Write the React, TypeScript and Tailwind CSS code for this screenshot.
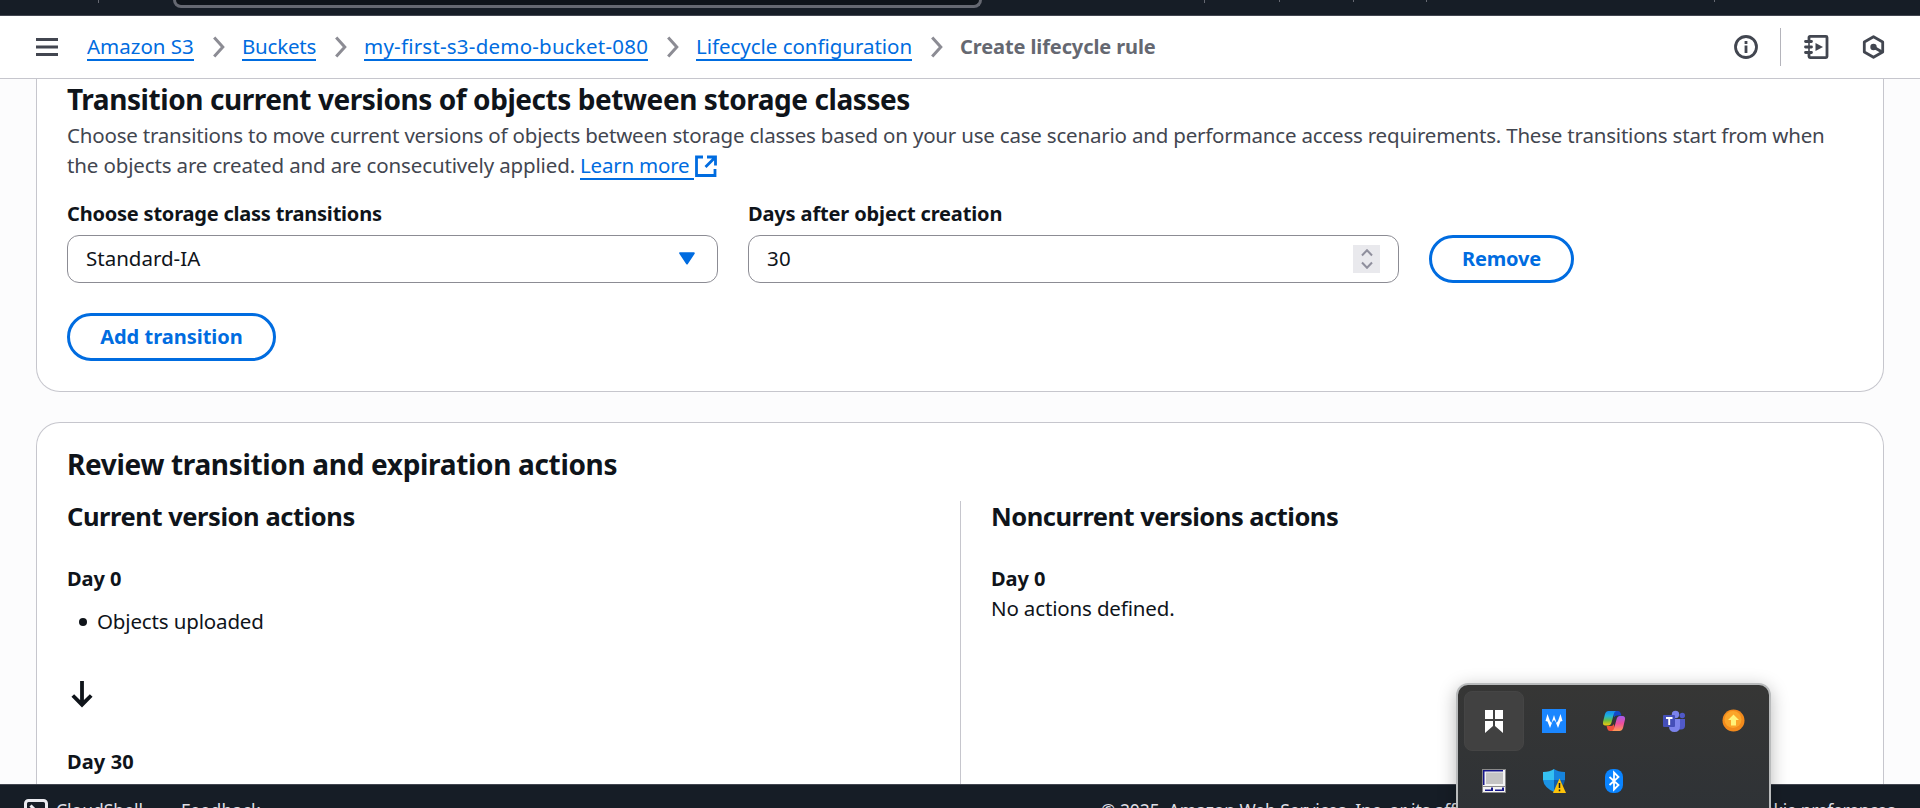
import React from "react";

const BODY = "text-[20.5px] leading-[30px] tracking-[-0.2px]";
const BOLD = "h-[30px] text-[20px] leading-[32px] font-bold";

function Chevron() {
  return (
    <svg width="12" height="22" viewBox="0 0 12 22" fill="none" stroke="#8c8c94" strokeWidth="3">
      <path d="M1.2 1.5 9.8 11 1.2 20.5" />
    </svg>
  );
}

function Crumb({ text, className }: { text: string; className: string }) {
  return (
    <a className={`block h-[29px] border-b-2 border-[#006ce0] text-[20.5px] leading-[29px] whitespace-nowrap text-[#006ce0] ${className}`}>
      {text}
    </a>
  );
}

function TopBar() {
  return (
    <div className="flex h-4 shrink-0 items-start border-b border-[#424650] bg-[#161d26]">
      <div className="ml-[98px] h-[3px] w-px bg-[#656871]" />
      <div className="ml-[74px] h-2 w-[809px] rounded-b-xl border-x-[3px] border-b-[3px] border-[#656871] bg-[#0f141a]" />
      <div className="ml-[222px] h-[3px] w-px bg-[#656871]" />
      <div className="ml-[74px] h-[2px] w-px bg-[#656871]" />
      <div className="ml-[73px] h-[2px] w-px bg-[#656871]" />
      <div className="ml-[72px] h-[2px] w-px bg-[#656871]" />
      <div className="ml-[287px] h-[2px] w-px bg-[#656871]" />
    </div>
  );
}

function Header() {
  return (
    <header className="flex h-[63px] shrink-0 items-start border-b border-[#c6c6cd] bg-white">
      <svg className="mt-[22px] ml-9" width="22" height="18" viewBox="0 0 22 18" fill="#424650">
        <path d="M0 0h22v3H0zM0 7.5h22v3H0zM0 15h22v3H0z" />
      </svg>
      <nav className="mt-4 ml-[29px] flex items-start">
        <Crumb text="Amazon S3" className="w-[107px] tracking-[0px]" />
        <span className="mt-[4px] ml-[19px] w-[29px]"><Chevron /></span>
        <Crumb text="Buckets" className="w-[74px] tracking-[-0.22px]" />
        <span className="mt-[4px] ml-[19px] w-[29px]"><Chevron /></span>
        <Crumb text="my-first-s3-demo-bucket-080" className="w-[284px] tracking-[0.22px]" />
        <span className="mt-[4px] ml-[19px] w-[29px]"><Chevron /></span>
        <Crumb text="Lifecycle configuration" className="w-[216px] tracking-[-0.03px]" />
        <span className="mt-[4px] ml-[19px] w-[29px]"><Chevron /></span>
        <span className="text-[20px] leading-[29px] font-bold tracking-[-0.1px] whitespace-nowrap text-[#656871]">
          Create lifecycle rule
        </span>
      </nav>
      <div className="mt-3 mr-[35px] ml-auto flex h-[38px] items-center">
        <svg width="24" height="24" viewBox="0 0 24 24" fill="none" stroke="#424650" strokeWidth="2.8">
          <circle cx="12" cy="12" r="10.5" />
          <path d="M12 10.5V18M12 6v3" />
        </svg>
        <div className="ml-[22px] h-[38px] w-px bg-[#b4b4bb]" />
        <svg className="ml-[23px]" width="25" height="24" viewBox="0 0 25 24" fill="none" stroke="#424650" strokeWidth="2.8">
          <path d="M5 5V2.400q0-1 1-1h16q1 0 1 1v19.200q0 1-1 1H6q-1 0-1-1V19" />
          <path d="M5 5v14" strokeWidth="1.600" />
          <path d="M1.500 6.500h6M1.500 12h6M1.500 17.500h6" strokeWidth="2.800" strokeLinecap="round" />
          <path d="M11.500 8v8l7.500-4z" fill="#424650" stroke="none" />
        </svg>
        <svg className="ml-[33px]" width="23" height="24" viewBox="0 0 23 24" fill="none" stroke="#424650" strokeWidth="2.8">
          <path d="M11.500 1.700 20.700 7v10l-9.200 5.300L2.300 17V7z" strokeLinejoin="round" />
          <path d="M11.500 12 20 17" strokeWidth="3" />
          <circle cx="11.500" cy="12" r="3.200" fill="#424650" stroke="none" />
        </svg>
      </div>
    </header>
  );
}

function PillButton({ children, className }: { children: React.ReactNode; className: string }) {
  return (
    <button className={`flex h-12 items-center justify-center rounded-full border-[3px] border-[#006ce0] bg-white text-[20px] font-bold whitespace-nowrap text-[#006ce0] ${className}`}>
      {children}
    </button>
  );
}

function TransitionCard() {
  return (
    <section className="mx-9 h-[313px] shrink-0 rounded-b-[24px] border-x border-b border-[#c6c6cd] bg-white px-[30px] pt-[2px]">
      <h2 className="text-[28px] leading-9 font-bold tracking-[-0.43px] whitespace-nowrap">
        Transition current versions of objects between storage classes
      </h2>
      <p className={`mt-[3px] whitespace-nowrap text-[#424650] ${BODY}`}>
        Choose transitions to move current versions of objects between storage classes based on your use case scenario and
        performance access requirements. These transitions start from when
        <br />
        <span className="flex items-start">
          <span className="w-[513px] tracking-[-0.14px]">the objects are created and are consecutively applied.</span>
          <a className="h-[30px] w-[114px] border-b-2 border-[#006ce0] tracking-[-0.2px] text-[#006ce0]">Learn more</a>
          <svg className="mt-[5px] ml-[1px]" width="22" height="22" viewBox="0 0 22 22" fill="none" stroke="#006ce0" strokeWidth="2.8">
            <path d="M8 2H1.500v18.500H20V14" />
            <path d="M12 2h8.500v8.500M20 2.400 10.500 12" />
          </svg>
        </span>
      </p>
      <div className="mt-[18px] flex items-end">
        <div className="w-[651px]">
          <div className={`whitespace-nowrap tracking-[-0.21px] ${BOLD}`}>Choose storage class transitions</div>
          <div className="mt-[7px] flex h-12 items-center justify-between rounded-xl border-[1.5px] border-[#8c8c94] bg-white pr-[22px] pb-0.5 pl-[18px]">
            <span className="text-[20.5px]">Standard-IA</span>
            <svg className="mt-px" width="16" height="13" viewBox="0 0 16 13" fill="#006ce0" stroke="#006ce0" strokeWidth="2" strokeLinejoin="round">
              <path d="M1.200 1.200h13.600L8 11.500z" />
            </svg>
          </div>
        </div>
        <div className="ml-[30px] w-[651px]">
          <div className={`whitespace-nowrap tracking-[-0.14px] ${BOLD}`}>Days after object creation</div>
          <div className="mt-[7px] flex h-12 items-center justify-between rounded-xl border-[1.5px] border-[#8c8c94] bg-white pr-[18px] pb-0.5 pl-[18px]">
            <span className="text-[20.5px] tracking-[0.3px]">30</span>
            <span className="mt-px flex h-7 w-[27px] items-center justify-center bg-[#e9e9ed]">
              <svg width="12" height="20" viewBox="0 0 12 20" fill="none" stroke="#8f8f9d" strokeWidth="2">
                <path d="M1 6.500 6 1.200l5 5.300M1 13.500l5 5.300 5-5.300" />
              </svg>
            </span>
          </div>
        </div>
        <PillButton className="ml-[30px] w-[145px] tracking-[-0.15px]">Remove</PillButton>
      </div>
      <PillButton className="mt-[30px] w-[209px] tracking-[0px]">Add transition</PillButton>
    </section>
  );
}

function ReviewCard() {
  return (
    <section className="mx-9 mt-[30px] flex-1 rounded-t-[24px] border-x border-t border-[#c6c6cd] bg-white px-[30px] pt-[23px]">
      <h2 className="text-[28px] leading-9 font-bold tracking-[-0.33px] whitespace-nowrap">
        Review transition and expiration actions
      </h2>
      <div className="mt-[19px] flex">
        <div className="h-[300px] w-[893px]">
          <h3 className="text-[25.5px] leading-[30px] font-bold tracking-[-0.44px]">Current version actions</h3>
          <div className={`mt-8 tracking-[-0.05px] ${BOLD}`}>Day 0</div>
          <div className={`mt-[13px] flex items-center ${BODY}`}>
            <span className="mt-0.5 ml-3 h-2 w-2 rounded-full bg-[#0f141a]" />
            <span className="ml-[10px] tracking-[-0.15px]">Objects uploaded</span>
          </div>
          <svg className="mt-[45px] ml-1" width="22" height="27" viewBox="0 0 22 27" fill="none" stroke="#0f141a" strokeWidth="3.8">
            <path d="M11 0v24M1.800 14.500l9.200 9.200 9.200-9.200" />
          </svg>
          <div className={`mt-[38px] tracking-[0.1px] ${BOLD}`}>Day 30</div>
        </div>
        <div className="border-l border-[#c6c6cd] pl-[30px]">
          <h3 className="text-[25.5px] leading-[30px] font-bold tracking-[-0.5px]">Noncurrent versions actions</h3>
          <div className={`mt-8 tracking-[-0.05px] ${BOLD}`}>Day 0</div>
          <div className="text-[20.5px] leading-[30px] tracking-[-0.15px]">No actions defined.</div>
        </div>
      </div>
    </section>
  );
}

function Footer() {
  return (
    <footer className="flex h-6 shrink-0 items-start border-t border-[#424650] bg-[#161d26] text-[17.5px] leading-[27px] whitespace-nowrap text-[#dedee3]">
      <svg className="mt-[14px] ml-6 shrink-0" width="24" height="24" viewBox="0 0 24 24" fill="none" stroke="#ebebf0" strokeWidth="3">
        <rect x="1.5" y="1.5" width="21" height="21" rx="3" />
        <path d="M6.500 6.500 12 12l-5.500 5.500" />
      </svg>
      <span className="mt-3 ml-2 w-[125px]">CloudShell</span>
      <span className="mt-3 tracking-[0.2px]">Feedback</span>
      <span className="mt-3 ml-auto w-[636px] tracking-[-0.1px]">© 2025, Amazon Web Services, Inc. or its affiliates.</span>
      <span className="mt-3 mr-[25px] flex w-[158px] justify-end tracking-[-0.3px]">Cookie preferences</span>
    </footer>
  );
}

const trayIcons: React.ReactNode[] = [
  <g fill="#fff">
    <path d="M3 1h8v9H3zM13 1h8v9h-8zM3 12h8v5l-8 7zM13 12h8v12l-8-7z" />
  </g>,
  <g>
    <path d="M0 0h24v24H0z" fill="#1a86ff" />
    <path d="M3.500 12 5.500 5 8 12 9.500 14 12 6 14.500 14 16 12 18.500 5 20.500 12 18.500 12.500 16 19 13.500 12.500 12 11 10.500 12.500 8 19 5.500 12.500z" fill="#fff" />
  </g>,
  <g>
    <defs>
      <linearGradient id="cpLeft" x1="0" y1="0" x2="0" y2="1">
        <stop offset="0" stopColor="#1687f0" />
        <stop offset="0.350" stopColor="#20b4d8" />
        <stop offset="0.650" stopColor="#69bd45" />
        <stop offset="1" stopColor="#f6c70a" />
      </linearGradient>
      <linearGradient id="cpRight" x1="0" y1="0" x2="0" y2="1">
        <stop offset="0" stopColor="#a45bea" />
        <stop offset="0.500" stopColor="#ee4f9b" />
        <stop offset="1" stopColor="#ff9a55" />
      </linearGradient>
    </defs>
    <path d="M10 2h6q2 0 2.600 2l.8 2.500h-4.500q-2 0-2.600 2z" fill="#1548c8" />
    <path d="M14 22H8q-2 0-2.600-2L4.600 17h4.500q2 0 2.600-2z" fill="#f0503c" />
    <path d="M6.500 2H14q-1.500.5-2.200 3L9.500 13.500Q8.800 16.500 6 16.500H3.500Q.5 16.500 1 13L3 5Q4 2 6.500 2z" fill="url(#cpLeft)" />
    <path d="M17.500 22H10q1.500-.5 2.200-3l2.300-8.500Q15.200 7 18 7h2.500q3 0 2.500 3.500l-2 8.500q-1 3-3.500 3z" fill="url(#cpRight)" />
  </g>,
  <g>
    <circle cx="13.500" cy="5.500" r="3.700" fill="#7b83eb" />
    <circle cx="20.300" cy="6.500" r="2.700" fill="#5059c9" />
    <path d="M15 10h8v6.500q0 4-4 4h-3z" fill="#5059c9" />
    <path d="M7 10h11v7q0 6-5.500 6T7 17z" fill="#7b83eb" />
    <rect x="1" y="6" width="12" height="12" rx="1" fill="#444fb8" />
    <path d="M4 9h6.500M7.200 9v7" stroke="#fff" strokeWidth="1.900" />
  </g>,
  <g>
    <circle cx="11.500" cy="11.500" r="11" fill="#f28a1c" />
    <circle cx="11" cy="10.500" r="8.500" fill="#fba52a" />
    <path d="M11.500 5.500 17 11h-3v5.500H9V11H6z" fill="#fff27a" />
  </g>,
  <g>
    <path d="M0 0h24v24H0z" fill="#8a8a8a" />
    <path d="M1 1h22v16H1zM1 18h22v5H1z" fill="#f4f4f4" />
    <path d="M1 1h20v1.500H2.500V16H1z" fill="#16168a" />
    <path d="M4 3.500h17V15H4z" fill="#c4c4c4" />
    <path d="M3 20.500h6V18.500h2V22H3zM13 20.500h7V18.500h2V22h-9z" fill="#16168a" />
  </g>,
  <g>
    <path d="M12 0q4 3 11 3v8H12z" fill="#1683dc" />
    <path d="M12 0Q8 3 1 3v8h11z" fill="#35c1f1" />
    <path d="M1 11h11v12Q2 18.500 1 11z" fill="#1b93e4" />
    <path d="M12 11h11q-1 7.500-11 12z" fill="#0f5cab" />
    <path d="M17.500 9.500 24 24H11z" fill="#fdc30a" />
    <path d="M17.500 14v5M17.500 20.500v1.800" stroke="#1a1a1a" strokeWidth="1.500" />
  </g>,
  <g>
    <rect x="3" y="0" width="18" height="24" rx="8" fill="#0a84ff" />
    <path d="m7.500 8 9 8-4.500 4.500v-17l4.500 4.500-9 8" fill="none" stroke="#fff" strokeWidth="1.800" />
  </g>,
];

function TrayPopup() {
  return (
    <div className="absolute top-[683px] left-[1456px] h-[140px] w-[315px] rounded-t-xl border-2 border-[#b9bbbc] bg-linear-to-b from-[#363635] to-[#2e3236] bg-clip-border px-1.5 pt-1.5 shadow-[0_4px_18px_rgba(0,0,0,0.28)]">
      <div className="grid grid-cols-[repeat(5,60px)]">
        {trayIcons.map((icon, i) => (
          <div key={i} className={i === 0 ? "flex h-[60px] items-center justify-center rounded-lg border border-[#454545] bg-[#414141]" : "flex h-[60px] items-center justify-center"}>
            <svg width="24" height="24" viewBox="0 0 24 24">{icon}</svg>
          </div>
        ))}
      </div>
    </div>
  );
}

export default function App() {
  return (
    <div className="relative flex h-[808px] w-[1920px] flex-col overflow-hidden bg-[#fcfcfd] font-['Noto_Sans','Open_Sans',sans-serif] text-[#0f141a]">
      <TopBar />
      <Header />
      <main className="flex h-[705px] shrink-0 flex-col overflow-hidden">
        <TransitionCard />
        <ReviewCard />
      </main>
      <Footer />
      <TrayPopup />
    </div>
  );
}
